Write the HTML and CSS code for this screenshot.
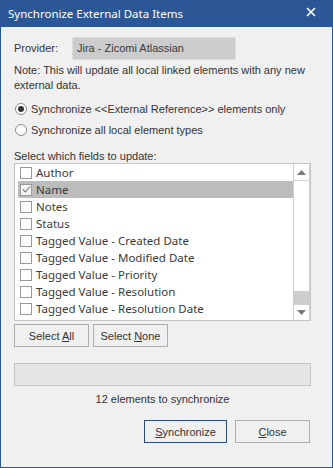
FILE: index.html
```html
<!DOCTYPE html>
<html>
<head>
<meta charset="utf-8">
<link rel="stylesheet" href="styles.css">
</head>
<body>
<div class="window">
  <div class="titlebar">
    <span class="title">Synchronize External Data Items</span>
    <svg class="close" width="10" height="10" viewBox="0 0 10 10"><path d="M1 1 L9 9 M9 1 L1 9" stroke="#fff" stroke-width="1.6"/></svg>
  </div>
  <div class="content">
    <div class="provider-row">
      <span class="provider-label">Provider:</span>
      <div class="textbox">Jira - Zicomi Atlassian</div>
    </div>
    <p class="note">Note: This will update all local linked elements with any new external data.</p>
    <div class="radios">
      <div class="radio-row"><span class="radio checked"></span><span>Synchronize &lt;&lt;External Reference&gt;&gt; elements only</span></div>
      <div class="radio-row"><span class="radio"></span><span>Synchronize all local element types</span></div>
    </div>
    <div class="fields-label">Select which fields to update:</div>
    <div class="listbox">
      <div class="items">
        <div class="item"><span class="cb"></span>Author</div>
        <div class="item selected"><span class="cb"><svg width="9" height="9" viewBox="0 0 9 9"><path d="M1 4.5 L3.5 7 L8 1.5" fill="none" stroke="#777" stroke-width="1.1"/></svg></span>Name</div>
        <div class="item"><span class="cb"></span>Notes</div>
        <div class="item"><span class="cb"></span>Status</div>
        <div class="item"><span class="cb"></span>Tagged Value - Created Date</div>
        <div class="item"><span class="cb"></span>Tagged Value - Modified Date</div>
        <div class="item"><span class="cb"></span>Tagged Value - Priority</div>
        <div class="item"><span class="cb"></span>Tagged Value - Resolution</div>
        <div class="item"><span class="cb"></span>Tagged Value - Resolution Date</div>
        <div class="item"><span class="cb"></span></div>
      </div>
      <div class="scrollbar">
        <div class="sb-btn"><svg width="9" height="5" viewBox="0 0 9 5"><path d="M0 5 L4.5 0 L9 5 Z" fill="#7a7a7a"/></svg></div>
        <div class="sb-track"></div>
        <div class="sb-thumb"></div>
        <div class="sb-btn down"><svg width="9" height="5" viewBox="0 0 9 5"><path d="M0 0 L9 0 L4.5 5 Z" fill="#7a7a7a"/></svg></div>
      </div>
    </div>
    <div class="btn-row">
      <button class="btn">Select <u>A</u>ll</button>
      <button class="btn">Select <u>N</u>one</button>
    </div>
    <div class="progress"></div>
    <div class="status">12 elements to synchronize</div>
    <div class="actions">
      <button class="btn default sync"><u>S</u>ynchronize</button>
      <button class="btn"><u>C</u>lose</button>
    </div>
  </div>
</div>
</body>
</html>
```

FILE: styles.css
```css
* { box-sizing: border-box; }
html, body { margin: 0; padding: 0; }
body {
  width: 333px;
  height: 468px;
  overflow: hidden;
  font-family: "Liberation Sans", Arial, sans-serif;
  font-size: 11px;
  color: #333;
}
.window {
  width: 333px;
  height: 468px;
  border: 1px solid #2b5797;
  background: #f0f0f0;
  display: flex;
  flex-direction: column;
}
.titlebar {
  height: 26px;
  background: #2b5797;
  display: flex;
  align-items: center;
  justify-content: space-between;
  padding: 0 16px 2px 7px;
  color: #fff;
}
.title {
  font-family: "Noto Sans", sans-serif;
  font-size: 11.5px;
}
.close { margin-top: -2px; }
.content {
  padding: 10px 22px 0 13px;
  display: flex;
  flex-direction: column;
}
.provider-row {
  display: flex;
  align-items: center;
  height: 22px;
}
.provider-label { width: 58px; }
.textbox {
  width: 164px;
  height: 23px;
  background: #cccccc;
  border: 1px solid #dddddd;
  padding-left: 4px;
  display: flex;
  align-items: center;
  color: #3a3a3a;
}
.note {
  margin: 4px 0 0 0;
  line-height: 15px;
  width: 300px;
}
.radios { margin-top: 5px; }
.radio-row {
  display: flex;
  align-items: center;
  height: 21px;
  gap: 4px;
  padding-left: 1px;
}
.radio {
  width: 12px;
  height: 12px;
  border-radius: 50%;
  border: 1px solid #8a8a8a;
  background: #fff;
  display: flex;
  align-items: center;
  justify-content: center;
}
.radio.checked::after {
  content: "";
  width: 6px;
  height: 6px;
  border-radius: 50%;
  background: #333;
}
.fields-label {
  margin-top: 9px;
  line-height: 14px;
}
.listbox {
  width: 297px;
  height: 158px;
  background: #fff;
  border: 1px solid #c4c4c4;
  display: flex;
  overflow: hidden;
}
.items {
  flex: 1;
  padding: 0 0 0 3px;
  overflow: hidden;
}
.item {
  height: 17px;
  display: flex;
  align-items: center;
  font-family: "Noto Sans", sans-serif;
  font-size: 11.5px;
  color: #3a3a3a;
  padding-left: 2px;
}
.item.selected { background: #bcbcbc; }
.cb {
  width: 12px;
  height: 12px;
  border: 1px solid #9a9a9a;
  background: #fff;
  margin-right: 4px;
  display: flex;
  align-items: center;
  justify-content: center;
}
.item.selected .cb { background: #f4f4f4; }
.scrollbar {
  width: 17px;
  display: flex;
  flex-direction: column;
  border-left: 1px solid #d0d0d0;
  border-right: 1px solid #d0d0d0;
}
.sb-btn {
  height: 17px;
  background: #fff;
  border-bottom: 1px solid #d0d0d0;
  display: flex;
  align-items: center;
  justify-content: center;
}
.sb-btn.down { border-bottom: none; border-top: 1px solid #d0d0d0; height: 16px; }
.sb-track { flex: 1; background: #fff; }
.sb-thumb { height: 13px; background: #cdcdcd; }
.btn-row {
  display: flex;
  gap: 4px;
  margin-top: 3px;
}
.btn {
  width: 75px;
  height: 23px;
  border: 1px solid #adadad;
  background: #f0f0f0;
  font-family: "Liberation Sans", Arial, sans-serif;
  font-size: 11px;
  color: #333;
  padding: 0;
}
.progress {
  margin-top: 16px;
  width: 297px;
  height: 23px;
  background: #e6e6e6;
  border: 1px solid #c4c4c4;
}
.status {
  margin-top: 6px;
  line-height: 14px;
  text-align: center;
  width: 297px;
}
.actions {
  margin-top: 14px;
  width: 296px;
  display: flex;
  justify-content: flex-end;
  gap: 8px;
}
.btn.sync { width: 83px; }
.btn.default { border-color: #2b4a7a; }
```
